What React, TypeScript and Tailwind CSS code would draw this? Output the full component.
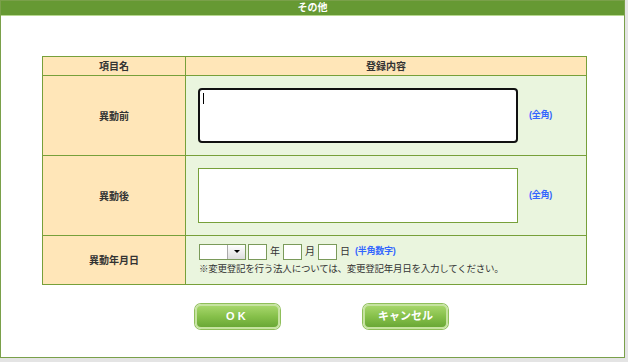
import React from 'react';

const font = { fontFamily: '"Liberation Sans", "Noto Sans CJK JP", sans-serif' };

function Hint({ children }: { children: React.ReactNode }) {
  return <span className="text-[9px] font-bold text-[#3366ff] tracking-tight">{children}</span>;
}

function SmallBox() {
  return <span className="inline-block w-[19px] h-[16px] bg-white border border-[#7a9a5a]" />;
}

function GreenButton({ label, wide }: { label: string; wide?: boolean }) {
  return (
    <button
      className={`h-[25px] w-[85px] rounded-[6px] border-2 border-[#c6e3a0] bg-gradient-to-b from-[#a6d66a] via-[#86c04a] to-[#6aa836] text-white text-[11px] font-bold shadow-[0_0_0_1px_#8fbf5a] ${wide ? 'tracking-normal' : 'tracking-[0.3em]'}`}
    >
      {label}
    </button>
  );
}

export default function App() {
  return (
    <div className="w-[628px] h-[362px] bg-[#e4e4e4] relative overflow-hidden" style={font}>
      {/* dialog */}
      <div className="w-[625px] h-[358px] bg-white border border-[#7aa04a] flex flex-col">
        <div className="h-[15px] bg-[#669933] border-b border-[#b8d890] flex items-center justify-center">
          <span className="text-white text-[10px] font-bold leading-none">その他</span>
        </div>

        <div className="pt-[40px] pl-[41px]">
          <table className="w-[545px] border-collapse text-[10px] text-[#333]">
            <thead>
              <tr className="h-[19px] bg-[#ffe6b8]">
                <th className="w-[143px] border border-[#77a03a] font-bold">項目名</th>
                <th className="border border-[#77a03a] font-bold">登録内容</th>
              </tr>
            </thead>
            <tbody>
              <tr className="h-[80px]">
                <td className="border border-[#77a03a] bg-[#ffe6b8] text-center font-bold pt-[2px]">異動前</td>
                <td className="border border-[#77a03a] bg-[#eaf5de] pl-[12px]">
                  <div className="flex items-center gap-[11px]">
                    <div className="w-[320px] h-[55px] bg-white border-2 border-[#111] rounded-[4px] relative">
                      <span className="absolute left-[3px] top-[3px] w-px h-[11px] bg-black" />
                    </div>
                    <Hint>(全角)</Hint>
                  </div>
                </td>
              </tr>
              <tr className="h-[80px]">
                <td className="border border-[#77a03a] bg-[#ffe6b8] text-center font-bold pt-[2px]">異動後</td>
                <td className="border border-[#77a03a] bg-[#eaf5de] pl-[12px]">
                  <div className="flex items-center gap-[11px]">
                    <div className="w-[320px] h-[55px] bg-white border border-[#77a03a]" />
                    <Hint>(全角)</Hint>
                  </div>
                </td>
              </tr>
              <tr className="h-[49px]">
                <td className="border border-[#77a03a] bg-[#ffe6b8] text-center font-bold">異動年月日</td>
                <td className="border border-[#77a03a] bg-[#eaf5de] pl-[13px]">
                  <div className="flex items-center gap-[3px] h-[17px]">
                    <span className="flex w-[47px] h-[16px] bg-white border border-[#7a9a5a] mr-[-1px]">
                      <span className="flex-1" />
                      <span className="w-[18px] bg-gradient-to-b from-white to-[#ddd] border-l border-[#aaa] flex items-center justify-center">
                        <span className="w-0 h-0 border-l-[3px] border-r-[3px] border-t-[3px] border-l-transparent border-r-transparent border-t-black" />
                      </span>
                    </span>
                    <SmallBox />
                    <span className="text-[10px] text-[#333]">年</span>
                    <SmallBox />
                    <span className="text-[10px] text-[#333]">月</span>
                    <SmallBox />
                    <span className="text-[10px] text-[#333] pr-[2px]">日</span>
                    <Hint>(半角数字)</Hint>
                  </div>
                  <div className="text-[9.5px] text-[#333] mt-[2px] tracking-tight">
                    ※変更登記を行う法人については、変更登記年月日を入力してください。
                  </div>
                </td>
              </tr>
            </tbody>
          </table>
        </div>

        <div className="flex pl-[194px] gap-[83px] pt-[19px]">
          <GreenButton label="OK" />
          <GreenButton label="キャンセル" wide />
        </div>
      </div>
    </div>
  );
}
